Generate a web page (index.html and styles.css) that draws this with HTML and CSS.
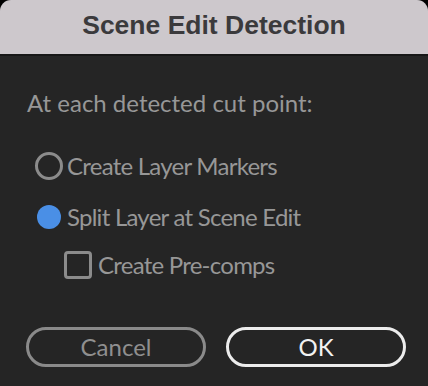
FILE: index.html
```html
<!DOCTYPE html>
<html>
<head>
<meta charset="utf-8">
<link rel="stylesheet" href="styles.css">
</head>
<body>
<div class="dialog">
  <div class="titlebar">Scene Edit Detection</div>
  <div class="content">
    <div class="label">At each detected cut point:</div>
    <div class="row row-1">
      <span class="radio"></span>
      <span class="text">Create Layer Markers</span>
    </div>
    <div class="row row-2">
      <span class="radio checked"><span class="dot"></span></span>
      <span class="text">Split Layer at Scene Edit</span>
    </div>
    <div class="row row-3">
      <span class="checkbox"></span>
      <span class="text">Create Pre-comps</span>
    </div>
    <div class="buttons">
      <button class="btn cancel">Cancel</button>
      <button class="btn ok">OK</button>
    </div>
  </div>
</div>
</body>
</html>
```

FILE: styles.css
```css
html, body {
  margin: 0;
  padding: 0;
  background: #000;
}
body {
  width: 428px;
  height: 386px;
  overflow: hidden;
}
.dialog {
  width: 428px;
  height: 386px;
  display: flex;
  flex-direction: column;
  background: #252525;
  border-radius: 11px 11px 0 0;
  overflow: hidden;
}
.titlebar {
  height: 56px;
  box-sizing: border-box;
  padding-bottom: 4px;
  background: #cdc8cc;
  border-bottom: 2px solid #171717;
  font-family: "Liberation Sans", Arial, sans-serif;
  font-weight: bold;
  font-size: 26.5px;
  line-height: 50px;
  color: #3b3a3c;
  text-align: center;
  flex: none;
}
.content {
  padding: 33px 22px 0 27px;
  font-family: Lato, "Liberation Sans", sans-serif;
  font-size: 24px;
  line-height: 28px;
  color: #979797;
  display: flex;
  flex-direction: column;
}
.label {
  height: 28px;
}
.row {
  display: flex;
  align-items: center;
  height: 28px;
}
.row .text {
  letter-spacing: -0.75px;
}
.row-1 {
  margin-top: 35px;
  padding-left: 8px;
}
.row-2 {
  margin-top: 23px;
  padding-left: 8px;
}
.row-3 {
  margin-top: 20px;
  padding-left: 37px;
}
.radio {
  width: 28px;
  height: 28px;
  box-sizing: border-box;
  border: 3.5px solid #8b8b8b;
  border-radius: 50%;
  margin-right: 4px;
  flex: none;
  display: flex;
  align-items: center;
  justify-content: center;
}
.radio.checked {
  border: none;
}
.radio .dot {
  width: 24px;
  height: 24px;
  border-radius: 50%;
  background: #4a8fe6;
}
.checkbox {
  width: 28px;
  height: 28px;
  box-sizing: border-box;
  border: 3.5px solid #8b8b8b;
  border-radius: 4px;
  margin-right: 6px;
  flex: none;
}
.buttons {
  display: flex;
  gap: 20px;
  margin-top: 48px;
  margin-left: -1px;
}
.btn {
  width: 180px;
  height: 40px;
  box-sizing: border-box;
  border-radius: 20px;
  background: transparent;
  font-family: Lato, "Liberation Sans", sans-serif;
  font-size: 24px;
  line-height: 28px;
  padding: 0;
}
.cancel {
  border: 3px solid #8a8a8a;
  color: #8f8f8f;
}
.ok {
  border: 3px solid #ececec;
  color: #f2f2f2;
}
```
